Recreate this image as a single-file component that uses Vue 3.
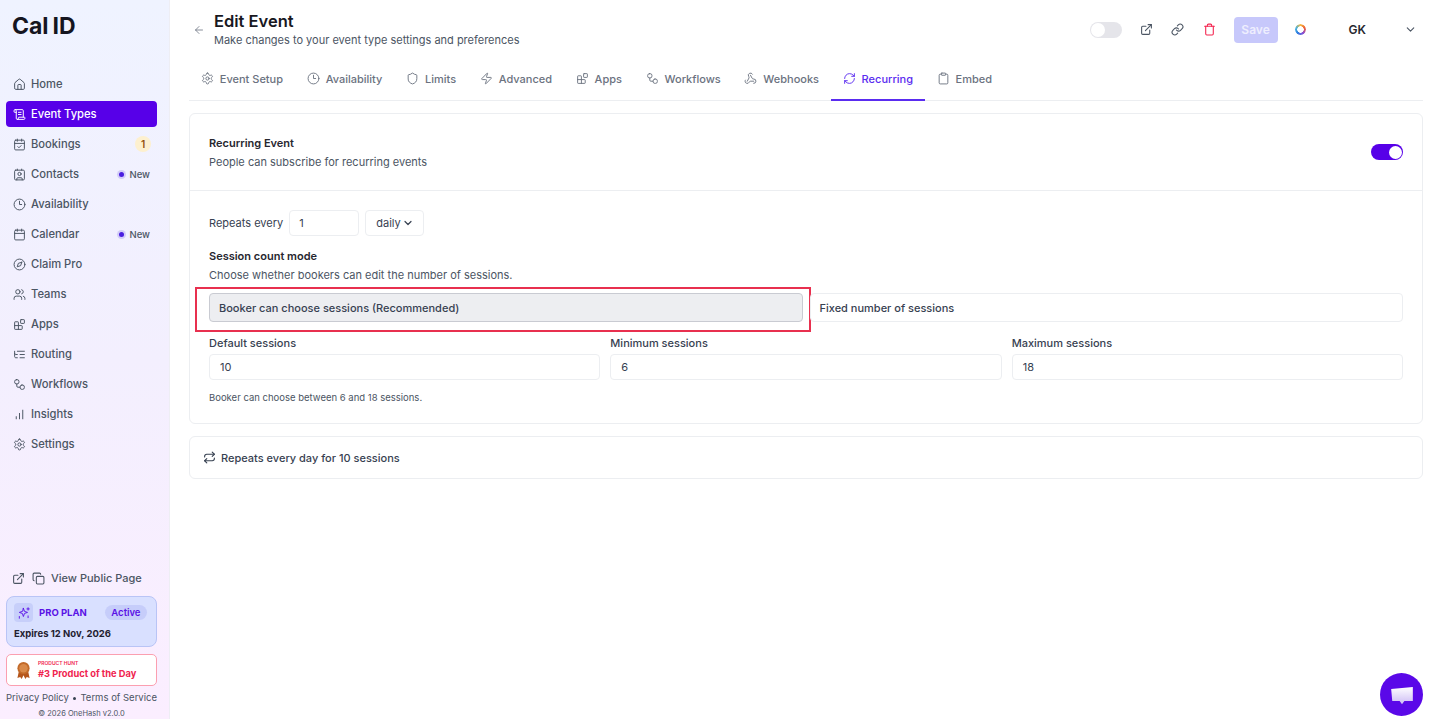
<script setup>
const icons = {
  home: '<path d="M15 21v-8a1 1 0 0 0-1-1h-4a1 1 0 0 0-1 1v8"/><path d="M3 10a2 2 0 0 1 .709-1.528l7-5.999a2 2 0 0 1 2.582 0l7 5.999A2 2 0 0 1 21 10v9a2 2 0 0 1-2 2H5a2 2 0 0 1-2-2z"/>',
  scroll: '<path d="M15 12h-5"/><path d="M15 8h-5"/><path d="M19 17V5a2 2 0 0 0-2-2H4"/><path d="M8 21h12a2 2 0 0 0 2-2v-1a1 1 0 0 0-1-1H11a1 1 0 0 0-1 1v1a2 2 0 1 1-4 0V5a2 2 0 1 0-4 0v2a1 1 0 0 0 1 1h3"/>',
  booking: '<path d="M8 2v4"/><path d="M16 2v4"/><rect width="18" height="18" x="3" y="4" rx="2"/><path d="M3 10h18"/><path d="m9 16 2 2 4-4"/>',
  contact: '<path d="M16 2v2"/><path d="M7 22v-2a2 2 0 0 1 2-2h6a2 2 0 0 1 2 2v2"/><path d="M8 2v2"/><circle cx="12" cy="11" r="3"/><rect x="3" y="4" width="18" height="18" rx="2"/>',
  clock: '<circle cx="12" cy="12" r="10"/><path d="M12 6v6h4"/>',
  calendar: '<path d="M8 2v4"/><path d="M16 2v4"/><rect width="18" height="18" x="3" y="4" rx="2"/><path d="M3 10h18"/>',
  compass: '<circle cx="12" cy="12" r="10"/><path d="m16.24 7.76-2.12 6.36-6.36 2.12 2.12-6.36 6.36-2.12z"/>',
  users: '<path d="M16 21v-2a4 4 0 0 0-4-4H6a4 4 0 0 0-4 4v2"/><circle cx="9" cy="7" r="4"/><path d="M22 21v-2a4 4 0 0 0-3-3.87"/><path d="M16 3.13a4 4 0 0 1 0 7.75"/>',
  blocks: '<rect width="7" height="7" x="14" y="3" rx="1"/><path d="M10 21V8a1 1 0 0 0-1-1H4a1 1 0 0 0-1 1v12a1 1 0 0 0 1 1h12a1 1 0 0 0 1-1v-5a1 1 0 0 0-1-1H3"/>',
  routing: '<path d="M21 12h-8"/><path d="M21 6H8"/><path d="M21 18h-8"/><path d="M3 6v4c0 1.1.9 2 2 2h3"/><path d="M3 10v6c0 1.1.9 2 2 2h3"/>',
  workflow: '<rect width="8" height="8" x="3" y="3" rx="3.5"/><path d="M7 11v4a2 2 0 0 0 2 2h4"/><rect width="8" height="8" x="13" y="13" rx="3.5"/>',
  chart: '<path d="M12 20V10"/><path d="M18 20V4"/><path d="M6 20v-4"/>',
  gear: '<path d="M12.22 2h-.44a2 2 0 0 0-2 2v.18a2 2 0 0 1-1 1.73l-.43.25a2 2 0 0 1-2 0l-.15-.08a2 2 0 0 0-2.73.73l-.22.38a2 2 0 0 0 .73 2.73l.15.1a2 2 0 0 1 1 1.72v.51a2 2 0 0 1-1 1.74l-.15.09a2 2 0 0 0-.73 2.73l.22.38a2 2 0 0 0 2.73.73l.15-.08a2 2 0 0 1 2 0l.43.25a2 2 0 0 1 1 1.73V20a2 2 0 0 0 2 2h.44a2 2 0 0 0 2-2v-.18a2 2 0 0 1 1-1.73l.43-.25a2 2 0 0 1 2 0l.15.08a2 2 0 0 0 2.73-.73l.22-.39a2 2 0 0 0-.73-2.73l-.15-.08a2 2 0 0 1-1-1.74v-.5a2 2 0 0 1 1-1.74l.15-.09a2 2 0 0 0 .73-2.73l-.22-.38a2 2 0 0 0-2.73-.73l-.15.08a2 2 0 0 1-2 0l-.43-.25a2 2 0 0 1-1-1.73V4a2 2 0 0 0-2-2z"/><circle cx="12" cy="12" r="3"/>',
  external: '<path d="M15 3h6v6"/><path d="M10 14 21 3"/><path d="M18 13v6a2 2 0 0 1-2 2H5a2 2 0 0 1-2-2V8a2 2 0 0 1 2-2h6"/>',
  copy: '<rect width="14" height="14" x="8" y="8" rx="2"/><path d="M4 16c-1.1 0-2-.9-2-2V4c0-1.1.9-2 2-2h10c1.1 0 2 .9 2 2"/>',
  shield: '<path d="M20 13c0 5-3.5 7.5-7.66 8.95a1 1 0 0 1-.67-.01C7.5 20.5 4 18 4 13V6a1 1 0 0 1 1-1c2 0 4.5-1.2 6.24-2.72a1.17 1.17 0 0 1 1.52 0C14.51 3.81 17 5 19 5a1 1 0 0 1 1 1z"/>',
  zap: '<path d="M4 14a1 1 0 0 1-.78-1.63l9.9-10.2a.5.5 0 0 1 .86.46l-1.92 6.02A1 1 0 0 0 13 10h7a1 1 0 0 1 .78 1.63l-9.9 10.2a.5.5 0 0 1-.86-.46l1.92-6.02A1 1 0 0 0 11 14z"/>',
  webhook: '<path d="M18 16.98h-5.99c-1.1 0-1.95.94-2.48 1.9A4 4 0 0 1 2 17c.01-.7.2-1.4.57-2"/><path d="m6 17 3.13-5.78c.53-.97.1-2.18-.5-3.1a4 4 0 1 1 6.89-4.06"/><path d="m12 6 3.13 5.73C15.66 12.7 16.9 13 18 13a4 4 0 0 1 0 8"/>',
  refresh: '<path d="M3 12a9 9 0 0 1 9-9 9.75 9.75 0 0 1 6.74 2.74L21 8"/><path d="M21 3v5h-5"/><path d="M21 12a9 9 0 0 1-9 9 9.75 9.75 0 0 1-6.74-2.74L3 16"/><path d="M8 16H3v5"/>',
  clipboard: '<rect width="8" height="4" x="8" y="2" rx="1" ry="1"/><path d="M16 4h2a2 2 0 0 1 2 2v14a2 2 0 0 1-2 2H6a2 2 0 0 1-2-2V6a2 2 0 0 1 2-2h2"/>',
  link: '<path d="M10 13a5 5 0 0 0 7.54.54l3-3a5 5 0 0 0-7.07-7.07l-1.72 1.71"/><path d="M14 11a5 5 0 0 0-7.54-.54l-3 3a5 5 0 0 0 7.07 7.07l1.71-1.71"/>',
  trash: '<path d="M3 6h18"/><path d="M19 6v14a2 2 0 0 1-2 2H7a2 2 0 0 1-2-2V6"/><path d="M8 6V4a2 2 0 0 1 2-2h4a2 2 0 0 1 2 2v2"/>',
  back: '<path d="m12 19-7-7 7-7"/><path d="M19 12H5"/>',
  chevron: '<path d="m6 9 6 6 6-6"/>',
  repeat: '<path d="m17 2 4 4-4 4"/><path d="M3 11v-1a4 4 0 0 1 4-4h14"/><path d="m7 22-4-4 4-4"/><path d="M21 13v1a4 4 0 0 1-4 4H3"/>',
  sparkles: '<path d="M11 4l1.8 5.2L18 11l-5.2 1.8L11 18l-1.8-5.2L4 11l5.2-1.8z"/><path d="M19 3v4"/><path d="M17 5h4"/><path d="M19 17v3"/><path d="M4 18v3"/>'
}

const navItems = [
  { label: 'Home', icon: 'home' },
  { label: 'Event Types', icon: 'scroll', active: true },
  { label: 'Bookings', icon: 'booking', count: 1 },
  { label: 'Contacts', icon: 'contact', isNew: true },
  { label: 'Availability', icon: 'clock' },
  { label: 'Calendar', icon: 'calendar', isNew: true },
  { label: 'Claim Pro', icon: 'compass' },
  { label: 'Teams', icon: 'users' },
  { label: 'Apps', icon: 'blocks' },
  { label: 'Routing', icon: 'routing' },
  { label: 'Workflows', icon: 'workflow' },
  { label: 'Insights', icon: 'chart' },
  { label: 'Settings', icon: 'gear' }
]

const tabs = [
  { label: 'Event Setup', icon: 'gear' },
  { label: 'Availability', icon: 'clock' },
  { label: 'Limits', icon: 'shield' },
  { label: 'Advanced', icon: 'zap' },
  { label: 'Apps', icon: 'blocks' },
  { label: 'Workflows', icon: 'workflow' },
  { label: 'Webhooks', icon: 'webhook' },
  { label: 'Recurring', icon: 'refresh', active: true },
  { label: 'Embed', icon: 'clipboard' }
]

const sessionFields = [
  { label: 'Default sessions', value: 10 },
  { label: 'Minimum sessions', value: 6 },
  { label: 'Maximum sessions', value: 18 }
]
</script>

<template>
  <div class="page">
    <aside class="sidebar">
      <div class="logo">Cal<span class="logo-id">ID</span></div>
      <nav class="nav">
        <a v-for="item in navItems" :key="item.label" class="nav-item" :class="{ active: item.active }">
          <svg class="icon" viewBox="0 0 24 24" v-html="icons[item.icon]"></svg>
          <span class="nav-label">{{ item.label }}</span>
          <span v-if="item.count" class="count">{{ item.count }}</span>
          <span v-if="item.isNew" class="new"><i class="dot"></i>New</span>
        </a>
      </nav>
      <div class="side-bottom">
        <div class="public-page">
          <svg class="icon" viewBox="0 0 24 24" v-html="icons.external"></svg>
          <svg class="icon" viewBox="0 0 24 24" v-html="icons.copy"></svg>
          <span>View Public Page</span>
        </div>
        <div class="plan">
          <div class="plan-top">
            <span class="plan-icon"><svg class="icon" viewBox="0 0 24 24" v-html="icons.sparkles"></svg></span>
            <span class="plan-name">PRO PLAN</span>
            <span class="plan-active">Active</span>
          </div>
          <div class="plan-expires">Expires 12 Nov, 2026</div>
        </div>
        <div class="hunt">
          <svg class="medal" viewBox="0 0 16 20">
            <path d="M3 11 1.5 18l3-1 1.5 2 2-4 2 4 1.5-2 3 1L13 11z" fill="#b5561c" />
            <circle cx="8" cy="7.5" r="6.5" fill="#c26a2a" />
            <circle cx="8" cy="7.5" r="4.5" fill="#d98a4a" />
          </svg>
          <div>
            <div class="hunt-small">PRODUCT HUNT</div>
            <div class="hunt-big">#3 Product of the Day</div>
          </div>
        </div>
        <div class="legal">Privacy Policy <span class="bullet"></span> Terms of Service</div>
        <div class="copyright">© 2026 OneHash v2.0.0</div>
      </div>
    </aside>

    <main class="main">
      <header class="topbar">
        <svg class="icon back" viewBox="0 0 24 24" v-html="icons.back"></svg>
        <div class="titles">
          <h1>Edit Event</h1>
          <p>Make changes to your event type settings and preferences</p>
        </div>
        <div class="actions">
          <span class="toggle-off"><i></i></span>
          <svg class="icon act first" viewBox="0 0 24 24" v-html="icons.external"></svg>
          <svg class="icon act" viewBox="0 0 24 24" v-html="icons.link"></svg>
          <svg class="icon act danger" viewBox="0 0 24 24" v-html="icons.trash"></svg>
          <button class="save">Save</button>
          <span class="ring"></span>
          <span class="user">GK</span>
          <svg class="icon user-caret" viewBox="0 0 24 24" v-html="icons.chevron"></svg>
        </div>
      </header>

      <div class="tabs">
        <a v-for="tab in tabs" :key="tab.label" class="tab" :class="{ active: tab.active }">
          <svg class="icon" viewBox="0 0 24 24" v-html="icons[tab.icon]"></svg>
          {{ tab.label }}
        </a>
      </div>

      <section class="card">
        <div class="card-head">
          <div>
            <div class="strong">Recurring Event</div>
            <div class="muted head-sub">People can subscribe for recurring events</div>
          </div>
          <span class="toggle-on"><i></i></span>
        </div>
        <div class="card-body">
          <div class="repeat-row">
            <span>Repeats every</span>
            <span class="input small">1</span>
            <span class="select">daily<svg class="icon" viewBox="0 0 24 24" v-html="icons.chevron"></svg></span>
          </div>
          <div class="strong mode-title">Session count mode</div>
          <div class="muted mode-sub">Choose whether bookers can edit the number of sessions.</div>
          <div class="modes">
            <div class="mode selected">
              Booker can choose sessions (Recommended)
              <span class="callout"></span>
            </div>
            <div class="mode">Fixed number of sessions</div>
          </div>
          <div class="fields">
            <div v-for="field in sessionFields" :key="field.label">
              <div class="field-label">{{ field.label }}</div>
              <div class="input">{{ field.value }}</div>
            </div>
          </div>
          <div class="hint">Booker can choose between 6 and 18 sessions.</div>
        </div>
      </section>

      <section class="card summary">
        <svg class="icon" viewBox="0 0 24 24" v-html="icons.repeat"></svg>
        Repeats every day for 10 sessions
      </section>
    </main>

    <button class="chat" aria-label="Chat">
      <svg viewBox="0 0 24 24" width="26" height="26">
        <defs>
          <linearGradient id="chatFill" x1="0" y1="0" x2="0" y2="1">
            <stop offset="0" stop-color="#ffffff" />
            <stop offset="1" stop-color="#cdbcf5" />
          </linearGradient>
        </defs>
        <path d="M2 6.5 22 4.5V17.5H14.2L12 20.5 9.8 17.5H3z" fill="url(#chatFill)" />
      </svg>
    </button>
  </div>
</template>

<style>
html, body {
  margin: 0;
  background: #fff;
  overflow: hidden;
}
</style>

<style scoped>
.page {
  display: flex;
  height: 719px;
  overflow: hidden;
  font-family: Inter, "Liberation Sans", sans-serif;
  font-size: 11px;
  color: #374151;
}
.icon {
  width: 14px;
  height: 14px;
  flex: none;
  fill: none;
  stroke: currentColor;
  stroke-width: 2;
  stroke-linecap: round;
  stroke-linejoin: round;
}

.sidebar {
  width: 170px;
  flex: none;
  box-sizing: border-box;
  padding: 0 12px 0 6px;
  display: flex;
  flex-direction: column;
  background: linear-gradient(180deg, #eff3ff 0%, #f3effe 50%, #fbeeff 100%);
  border-right: 1px solid #eeeef4;
}
.logo {
  margin: 13px 0 0 6px;
  font-size: 23px;
  line-height: 26px;
  font-weight: 700;
  color: #15151f;
  letter-spacing: 0;
}
.logo-id {
  margin-left: 4px;
}
.nav {
  margin-top: 32px;
  display: flex;
  flex-direction: column;
  gap: 4px;
}
.nav-item {
  height: 26px;
  border-radius: 4px;
  padding: 0 7px 0 7px;
  display: flex;
  align-items: center;
  gap: 5px;
  font-size: 11.2px;
  font-weight: 500;
  color: #4b5563;
}
.nav-item .icon {
  width: 13px;
  height: 13px;
  stroke-width: 1.8;
}
.nav-item.active {
  background: #5700e8;
  color: #fff;
}
.nav-label {
  flex: 1;
}
.count {
  width: 16px;
  height: 16px;
  margin-right: -1px;
  border-radius: 50%;
  background: #fdf0cf;
  color: #92500f;
  font-size: 10px;
  font-weight: 600;
  display: flex;
  align-items: center;
  justify-content: center;
}
.new {
  display: flex;
  align-items: center;
  gap: 6px;
  font-size: 9.5px;
  font-weight: 500;
}
.dot {
  width: 5px;
  height: 5px;
  border-radius: 50%;
  background: #4a1ee0;
  box-shadow: 0 0 0 2px #d3cdf8;
}

.side-bottom {
  margin-top: auto;
}
.public-page {
  display: flex;
  align-items: center;
  gap: 6.5px;
  padding-left: 6px;
  font-weight: 500;
  color: #4b5563;
  height: 20px;
}
.public-page .icon {
  width: 13px;
  height: 13px;
}
.plan {
  margin-top: 8px;
  height: 51px;
  box-sizing: border-box;
  border: 1px solid #b9c4f6;
  border-radius: 8px;
  background: #d9e0ff;
  padding: 6px 9px 6px 7px;
}
.plan-top {
  display: flex;
  align-items: center;
}
.plan-icon {
  width: 19px;
  height: 19px;
  border-radius: 4px;
  background: #c7cffa;
  color: #5a12e6;
  display: flex;
  align-items: center;
  justify-content: center;
}
.plan-icon .icon {
  width: 14px;
  height: 14px;
  stroke-width: 1.6;
}
.plan-name {
  margin-left: 6px;
  flex: 1;
  color: #5a12e6;
  font-size: 9.5px;
  font-weight: 700;
}
.plan-active {
  padding: 2px 6.5px;
  border-radius: 10px;
  background: #c6cdfa;
  color: #5a12e6;
  font-size: 9.5px;
  font-weight: 600;
}
.plan-expires {
  margin-top: 6px;
  font-size: 9.5px;
  line-height: 12px;
  font-weight: 700;
  color: #1f2030;
}
.hunt {
  margin-top: 7px;
  height: 32px;
  box-sizing: border-box;
  border: 1px solid #fb9fb0;
  border-radius: 5px;
  background: #fff;
  padding: 0 0 0 9px;
  display: flex;
  align-items: center;
  gap: 7px;
  color: #f0244f;
}
.medal {
  width: 15px;
  height: 19px;
  flex: none;
}
.hunt-small {
  font-size: 5px;
  font-weight: 600;
  line-height: 7px;
}
.hunt-big {
  font-size: 9.3px;
  font-weight: 700;
  line-height: 13px;
}
.legal {
  margin-top: 6px;
  font-size: 9.5px;
  line-height: 12px;
  color: #4b5563;
  white-space: nowrap;
  display: flex;
  align-items: center;
  justify-content: space-between;
}
.bullet {
  width: 3px;
  height: 3px;
  border-radius: 50%;
  background: #374151;
}
.copyright {
  margin-top: 4px;
  text-align: center;
  font-size: 7.5px;
  line-height: 11px;
  color: #4b5563;
}

.main {
  flex: 1;
  min-width: 0;
  box-sizing: border-box;
  padding: 0 6px 0 19px;
}
.topbar {
  height: 59px;
  display: flex;
  align-items: center;
  color: #6b7280;
}
.back {
  width: 12px;
  height: 12px;
  margin: 0 9px 0 4px;
  stroke-width: 1.6;
}
.titles h1 {
  margin: 0;
  font-size: 16.5px;
  line-height: 18px;
  font-weight: 600;
  color: #18181f;
}
.titles p {
  margin: 3px 0 0;
  font-size: 11px;
  line-height: 15px;
  color: #4b5563;
}
.actions {
  margin-left: auto;
  display: flex;
  align-items: center;
  color: #4b5563;
}
.toggle-off {
  width: 32px;
  height: 16px;
  border-radius: 8px;
  background: #e5e5ea;
  display: flex;
  align-items: center;
}
.toggle-off i {
  width: 14px;
  height: 14px;
  margin-left: 1px;
  border-radius: 50%;
  background: #fff;
}
.act {
  width: 13px;
  height: 13px;
  margin-left: 18px;
}
.act.first {
  margin-left: 18px;
}
.act.danger {
  margin-left: 19px;
  color: #f4254f;
}
.save {
  width: 44px;
  height: 26px;
  margin-left: 18px;
  padding: 0;
  border: 0;
  border-radius: 4px;
  background: #c7c8fb;
  color: #eeeefe;
  font: 600 12px Inter, sans-serif;
}
.ring {
  width: 11px;
  height: 11px;
  margin-left: 17px;
  box-sizing: border-box;
  border-radius: 50%;
  background: conic-gradient(#f6b73c, #ee5a36, #8a4fd8, #2f7de1, #45b3e0, #f6b73c);
  -webkit-mask: radial-gradient(circle, transparent 3px, #000 3.5px);
  mask: radial-gradient(circle, transparent 3px, #000 3.5px);
}
.user {
  margin-left: 43px;
  font-size: 12px;
  font-weight: 600;
  color: #27272f;
}
.user-caret {
  width: 13px;
  height: 13px;
  margin: 0 6px 0 38px;
}

.tabs {
  display: flex;
  height: 42px;
  box-sizing: border-box;
  border-bottom: 1px solid #eceef1;
}
.tab {
  height: 42px;
  box-sizing: border-box;
  padding: 0 11.8px 3px;
  display: flex;
  align-items: center;
  gap: 6px;
  font-weight: 500;
  color: #6b7280;
}
.tab .icon {
  width: 13px;
  height: 13px;
  stroke-width: 1.7;
}
.tab.active {
  color: #5a2cf0;
  padding-bottom: 1px;
  border-bottom: 2px solid #5a2cf0;
}

.card {
  border: 1px solid #eceef1;
  border-radius: 6px;
  background: #fff;
}
.tabs + .card {
  margin-top: 12px;
}
.card-head {
  height: 77px;
  box-sizing: border-box;
  border-bottom: 1px solid #eceef1;
  padding: 0 19px;
  display: flex;
  align-items: center;
  justify-content: space-between;
}
.strong {
  font-weight: 600;
  color: #27272f;
  line-height: 16px;
}
.muted {
  color: #4b5563;
  line-height: 16px;
}
.head-sub {
  margin-top: 3px;
}
.toggle-on {
  width: 32px;
  height: 16px;
  border-radius: 8px;
  background: #5700e8;
  display: flex;
  align-items: center;
  justify-content: flex-end;
}
.toggle-on i {
  width: 13px;
  height: 13px;
  margin-right: 1.5px;
  border-radius: 50%;
  background: #fff;
}
.card-body {
  padding: 19px 19px 0;
  height: 232px;
  box-sizing: border-box;
}
.repeat-row {
  display: flex;
  align-items: center;
  gap: 6px;
}
.input {
  height: 26px;
  box-sizing: border-box;
  border: 1px solid #eceef1;
  border-radius: 4px;
  padding: 0 10px;
  display: flex;
  align-items: center;
  background: #fff;
  color: #374151;
}
.input.small {
  width: 70px;
  padding: 0 9px;
}
.select {
  height: 26px;
  box-sizing: border-box;
  border: 1px solid #eceef1;
  border-radius: 4px;
  padding: 0 9px 0 10px;
  display: flex;
  align-items: center;
  gap: 1px;
}
.select .icon {
  width: 12px;
  height: 12px;
  stroke-width: 2.4;
}
.mode-title {
  margin-top: 12px;
}
.mode-sub {
  margin-top: 3px;
}
.modes {
  margin-top: 10px;
  display: grid;
  grid-template-columns: 1fr 1fr;
  gap: 7px;
}
.mode {
  position: relative;
  height: 29px;
  box-sizing: border-box;
  border: 1px solid #eceef1;
  border-radius: 4px;
  padding: 0 9px;
  display: flex;
  align-items: center;
  font-weight: 500;
  color: #374151;
}
.mode.selected {
  background: #edeef1;
  border-color: #c9cbd2;
}
.callout {
  position: absolute;
  top: -7px;
  bottom: -11px;
  left: -15px;
  right: -9px;
  border: 2px solid rgb(232, 48, 79);
  pointer-events: none;
}
.fields {
  margin-top: 13px;
  display: grid;
  grid-template-columns: repeat(3, 1fr);
  gap: 10px;
}
.field-label {
  margin-bottom: 3px;
  line-height: 16px;
  font-weight: 500;
  color: #374151;
}
.hint {
  margin-top: 11px;
  font-size: 9.5px;
  line-height: 14px;
  color: #4b5563;
}
.summary {
  margin-top: 12px;
  height: 43px;
  box-sizing: border-box;
  padding: 0 13px;
  display: flex;
  align-items: center;
  gap: 5px;
  font-weight: 500;
}
.summary .icon {
  width: 13px;
  height: 13px;
}

.chat {
  position: fixed;
  right: 6px;
  bottom: 3px;
  width: 43px;
  height: 43px;
  padding: 0;
  border: 0;
  border-radius: 50%;
  background: #5a08e8;
  display: flex;
  align-items: center;
  justify-content: center;
}
</style>
